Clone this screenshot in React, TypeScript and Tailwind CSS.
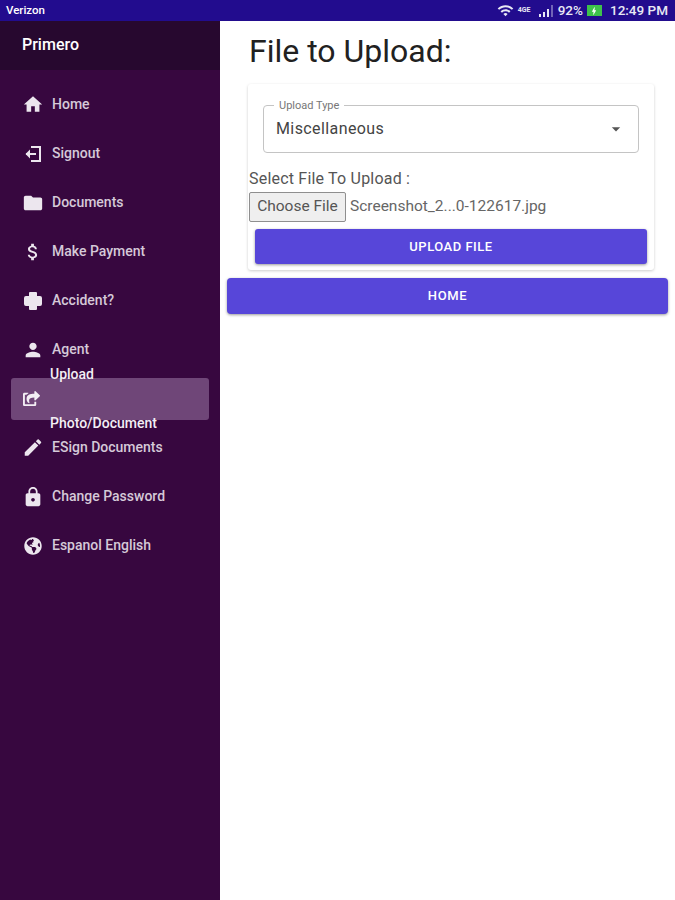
import { MdHome, MdFolder, MdAttachMoney, MdPerson, MdEdit, MdLock, MdArrowDropDown, MdWifi, MdBolt } from "react-icons/md";
import { FaGlobeAmericas, FaShareSquare } from "react-icons/fa";

const SignoutIcon = () => (
  <svg viewBox="0 0 20 20" className="w-[20px] h-[20px]" fill="none" stroke="currentColor" strokeWidth="2">
    <path d="M8 3h9v14H8" />
    <path d="M13 10H3" />
    <path d="M7 5.5L2.5 10 7 14.5" fill="currentColor" stroke="none" />
  </svg>
);

const CrossIcon = () => (
  <svg viewBox="0 0 20 20" className="w-[20px] h-[20px]" fill="currentColor">
    <path d="M7 1h6a1 1 0 0 1 1 1v3h3a2 2 0 0 1 2 2v6a2 2 0 0 1-2 2h-3v3a1 1 0 0 1-1 1H7a1 1 0 0 1-1-1v-3H3a2 2 0 0 1-2-2V7a2 2 0 0 1 2-2h3V2a1 1 0 0 1 1-1z" />
  </svg>
);

const items = [
  { label: "Home", icon: <MdHome size={23} /> },
  { label: "Signout", icon: <SignoutIcon /> },
  { label: "Documents", icon: <MdFolder size={24} /> },
  { label: "Make Payment", icon: <MdAttachMoney size={26} /> },
  { label: "Accident?", icon: <CrossIcon /> },
  { label: "Agent", icon: <MdPerson size={26} /> },
  { label: "Upload Photo/Document", icon: <FaShareSquare size={17} />, active: true },
  { label: "ESign Documents", icon: <MdEdit size={23} /> },
  { label: "Change Password", icon: <MdLock size={22} /> },
  { label: "Espanol English", icon: <FaGlobeAmericas size={18} /> },
];

const StatusBar = () => (
  <div className="h-[21px] bg-[#220c8e] flex items-center justify-between pl-[6px] pr-[7px] text-white text-[12px] font-medium shrink-0">
    <span className="text-[11.5px]">Verizon</span>
    <div className="flex items-center gap-[4px] text-[#e8e8f4] text-[13.5px]">
      <MdWifi size={17} />
      <span className="text-[7px] font-bold w-[16px] leading-none">4GE</span>
      <svg viewBox="0 0 16 12" className="w-[16px] h-[12px]" fill="currentColor">
        <path d="M1 9h2v3H1zM5 7h2v5H5zM9 4h2v8H9z" />
        <path d="M13 0h2v12h-2z" opacity="0.4" />
      </svg>
      <span>92%</span>
      <div className="w-[15px] h-[11px] bg-[#3ec24b] flex items-center justify-center text-white">
        <MdBolt size={10} />
      </div>
      <span className="ml-[4px]">12:49 PM</span>
    </div>
  </div>
);

const Sidebar = () => (
  <aside className="w-[220px] bg-[#37073f] shrink-0 flex flex-col">
    <div className="h-[49px] bg-[#27082f] flex items-center pl-[22px] text-white text-[16px] font-medium pb-[2px]">Primero</div>
    <nav className="pt-[10px] px-[11px]">
      {items.map((item) =>
        item.active ? (
          <div key={item.label} className="h-[42px] my-[3.5px] bg-[#6f4678] rounded-[3px] flex items-center text-[#f3eef4]">
            <div className="w-[39px] pl-[12px] flex items-center">{item.icon}</div>
            <span className="w-[125px] text-[14px] font-medium leading-[49px] shrink-0">{item.label}</span>
          </div>
        ) : (
          <div key={item.label} className="h-[49px] flex items-center text-[#d5c9d8]">
            <div className="w-[42px] pl-[12px] flex items-center justify-start -ml-[1px] text-[#ece6ee]">
              <div className="w-[22px] flex justify-center">{item.icon}</div>
            </div>
            <span className="text-[14px] font-medium">{item.label}</span>
          </div>
        )
      )}
    </nav>
  </aside>
);

export default function App() {
  return (
    <div className="w-[675px] h-[900px] flex flex-col overflow-hidden bg-white font-['Roboto',sans-serif]">
      <StatusBar />
      <div className="flex flex-1 min-h-0">
        <Sidebar />
        <main className="flex-1 pl-[7px] pr-[7px]">
          <h1 className="pl-[22px] h-[63px] flex items-center text-[32px] leading-none text-[#212121] pb-[3px]">File to Upload:</h1>
          <div className="ml-[21px] mr-[14px] h-[186px] shadow-[0_1px_3px_rgba(0,0,0,0.2)] rounded-[3px] flex flex-col">
            <div className="pt-[21px] px-[15px]">
              <div className="relative h-[48px] border border-[#c4c4c4] rounded-[4px] flex items-center justify-between pl-[12px] pr-[12px]">
                <span className="absolute -top-[7px] left-[10px] bg-white px-[5px] text-[11px] leading-[13px] text-[#777777]">Upload Type</span>
                <span className="text-[16px] tracking-[0.4px] text-[#444444]">Miscellaneous</span>
                <MdArrowDropDown size={20} className="text-[#555555]" />
              </div>
            </div>
            <div className="mt-[16px] text-[16px] leading-[20px] text-[#555555] pl-[1px] tracking-[0.2px] bg-white">Select File To Upload :</div>
            <div className="mt-[3px] flex items-center pl-[1px] bg-white">
              <div className="w-[97px] h-[30px] bg-[#efefef] border border-[#8f8f8f] rounded-[2px] flex items-center justify-center text-[15.5px] text-[#555555]">Choose File</div>
              <span className="ml-[4px] text-[15.5px] text-[#666666]">Screenshot_2...0-122617.jpg</span>
            </div>
            <div className="mt-[7px] px-[7px]">
              <div className="h-[35px] bg-[#5746d9] rounded-[3px] shadow-[0_1px_3px_rgba(0,0,0,0.4)] flex items-center justify-center text-white text-[13px] font-medium tracking-[0.5px]">UPLOAD FILE</div>
            </div>
          </div>
          <div className="mt-[8px] h-[36px] bg-[#5746d9] rounded-[4px] shadow-[0_1px_3px_rgba(0,0,0,0.4)] flex items-center justify-center text-white text-[13px] font-medium tracking-[0.6px]">HOME</div>
        </main>
      </div>
    </div>
  );
}
